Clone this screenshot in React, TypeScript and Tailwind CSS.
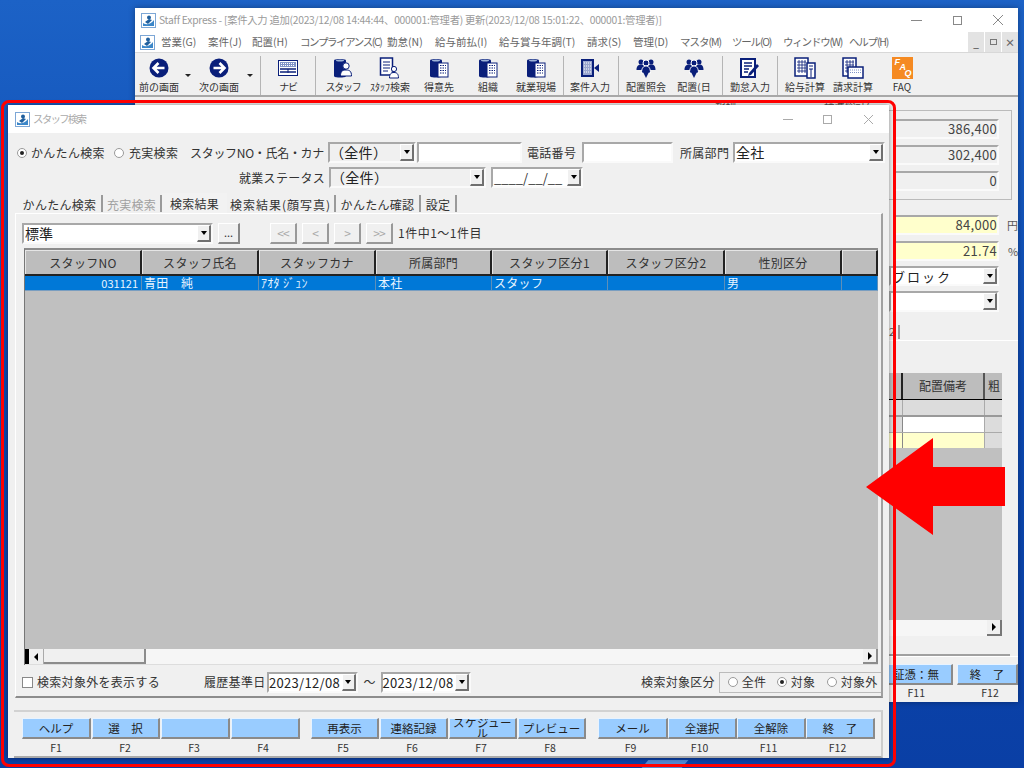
import React from 'react';

const FONT = { fontFamily: '"Noto Sans CJK JP", "Liberation Sans", sans-serif' };

const Navy = '#0a1f7a';

function ArrowIcon({ dir }: { dir: 'l' | 'r' }) {
  return (
    <svg width="20" height="20" viewBox="0 0 20 20">
      <circle cx="10" cy="10" r="9.5" fill={Navy} />
      {dir === 'l' ? (
        <path d="M15.5 10H5M9.5 5L4.5 10l5 5" stroke="#fff" strokeWidth="2.6" fill="none" />
      ) : (
        <path d="M4.5 10H15M10.5 5l5 5-5 5" stroke="#fff" strokeWidth="2.6" fill="none" />
      )}
    </svg>
  );
}
function Drum({ kind }: { kind: 'person' | 'building' }) {
  return (
    <svg width="22" height="22" viewBox="0 0 22 22">
      <path d="M2 3.5C2 1.5 14 1.5 14 3.5V19C14 21 2 21 2 19Z" fill={Navy} />
      <ellipse cx="8" cy="3.5" rx="4" ry="1" fill="#9fb4d8" />
      {kind === 'person' ? (
        <>
          <circle cx="14" cy="9" r="3.2" fill="#fff" stroke={Navy} />
          <path d="M8.5 19c0-5 2-6 5.500-6s5.500 1 5.500 6Z" fill="#fff" stroke={Navy} />
        </>
      ) : (
        <>
          <rect x="10" y="6" width="10" height="14" fill="#fff" stroke={Navy} />
          <path d="M12 8.500h6M12 11h6M12 13.500h6M12 16h6" stroke={Navy} strokeWidth="1" strokeDasharray="1.500 1" />
        </>
      )}
    </svg>
  );
}
function NaviIcon() {
  return (
    <svg width="20" height="20" viewBox="0 0 20 20">
      <rect x="0.500" y="2.500" width="19" height="15" fill="#fff" stroke={Navy} />
      <rect x="2" y="4" width="16" height="5" fill="#7f93c8" />
      <path d="M3 5.500h14M3 7.500h14" stroke="#fff" strokeDasharray="1 1" />
      <path d="M2 11h16M2 14h16" stroke={Navy} strokeWidth="1.500" />
      <path d="M10 11v4" stroke={Navy} />
    </svg>
  );
}
function DocPersonIcon() {
  return (
    <svg width="22" height="22" viewBox="0 0 22 22">
      <rect x="1.500" y="1" width="12" height="17" fill="#fff" stroke={Navy} strokeWidth="1.500" />
      <path d="M4 5h7M4 8h7M4 11h7M4 14h5" stroke={Navy} strokeWidth="1.200" />
      <circle cx="15" cy="12" r="2.600" fill="#fff" stroke={Navy} />
      <path d="M10.500 21c0-4 1.500-5.500 4.500-5.500s4.500 1.500 4.500 5.500Z" fill="#fff" stroke={Navy} />
    </svg>
  );
}
function CaseIcon() {
  return (
    <svg width="22" height="22" viewBox="0 0 22 22">
      <rect x="2" y="2" width="13" height="18" fill={Navy} />
      <rect x="4" y="4" width="9" height="14" fill="#9aa6cf" />
      <path d="M5 6h7M5 9h7M5 12h7M5 15h7" stroke="#fff" strokeDasharray="1 1" />
      <path d="M15 11l5-4v8Z" fill={Navy} />
    </svg>
  );
}
function PeopleIcon() {
  return (
    <svg width="22" height="22" viewBox="0 0 22 22">
      <circle cx="6" cy="5" r="2.500" fill={Navy} />
      <circle cx="16" cy="5" r="2.500" fill={Navy} />
      <path d="M1.500 13c0-4 2-5.500 4.500-5.500S10 9 10 13Zm10.500 0c0-4 2-5.500 4.500-5.500S20.500 9 20.500 13Z" fill={Navy} />
      <circle cx="11" cy="6" r="3" fill={Navy} stroke="#fff" />
      <path d="M6.500 16c0-5 2-7 4.500-7s4.500 2 4.500 7Z" fill={Navy} stroke="#fff" />
      <path d="M8 15h6l-3 6Z" fill={Navy} />
    </svg>
  );
}
function PenIcon() {
  return (
    <svg width="22" height="22" viewBox="0 0 22 22">
      <rect x="2" y="2" width="14" height="18" fill="#fff" stroke={Navy} strokeWidth="2" />
      <path d="M5 6h8M5 9h8M5 12h5M5 15h4" stroke={Navy} strokeWidth="1.400" />
      <path d="M10 16l8-9 2 2-8 9-3 1Z" fill={Navy} />
    </svg>
  );
}
function CalcIcon({ alt }: { alt?: boolean }) {
  return (
    <svg width="22" height="22" viewBox="0 0 22 22">
      <rect x="1" y="1" width="13" height="18" fill="#fff" stroke={Navy} strokeWidth="1.500" />
      <path d="M3 5h9M3 8h9M3 11h9M3 14h9M5 3v13M8 3v13M11 3v13" stroke={Navy} strokeWidth="0.800" />
      {alt ? (
        <>
          <rect x="6" y="10" width="15" height="11" fill="#fff" stroke={Navy} strokeWidth="1.500" />
          <path d="M8 13h11M8 15.500h11" stroke="#7f93c8" strokeDasharray="1 1" />
        </>
      ) : (
        <>
          <rect x="13" y="6" width="8" height="15" fill="#fff" stroke={Navy} strokeWidth="1.500" />
          <path d="M15 9h4M15 12h4M17 12v8" stroke={Navy} />
        </>
      )}
    </svg>
  );
}
function FaqIcon() {
  return (
    <div className="w-[21px] h-[22px] bg-[#f58a22] text-white font-bold italic text-[9px] leading-[7px] relative" style={{ fontFamily: '"Liberation Sans", sans-serif' }}>
      <span className="absolute left-[3px] top-[2px]">F</span>
      <span className="absolute left-[8px] top-[7px]">A</span>
      <span className="absolute left-[13px] top-[13px]">Q</span>
    </div>
  );
}

function Tool({ w, label, icon, tight }: { w: number; label: string; icon: React.ReactNode; tight?: boolean }) {
  return (
    <div style={{ width: w }} className="flex flex-col items-center shrink-0 h-[45px]">
      <div className="h-[24px] mt-[3px] flex items-center justify-center">{icon}</div>
      <div className={`whitespace-nowrap leading-[14px] text-[10px] text-[#333] ${tight ? 'tracking-[-1.2px]' : ''}`}>{label}</div>
    </div>
  );
}
function Tri({ w }: { w: number }) {
  return (
    <div style={{ width: w }} className="shrink-0 flex justify-center pt-[21px]">
      <div className="w-0 h-0 border-l-[3px] border-r-[3px] border-t-[3px] border-l-transparent border-r-transparent border-t-[#222]" />
    </div>
  );
}
function Sep({ w }: { w: number }) {
  return (
    <div style={{ width: w }} className="shrink-0 flex justify-center pt-[3px]">
      <div className="w-[1px] h-[39px] bg-[#b5b5b5]" />
    </div>
  );
}

const menus: [string, number, string][] = [
  ['営業(G)', 47, ''], ['案件(J)', 44, ''], ['配置(H)', 48, ''], ['コンプライアンス(C)', 87, 'tracking-[-1.4px]'], ['勤怠(N)', 48, ''], ['給与前払(I)', 64, ''],
  ['給与賞与年調(T)', 88, ''], ['請求(S)', 46, ''], ['管理(D)', 47, ''], ['マスタ(M)', 52, 'tracking-[-1px]'], ['ツール(O)', 51, 'tracking-[-1.2px]'], ['ウィンドウ(W)', 66, 'tracking-[-1.2px]'], ['ヘルプ(H)', 50, 'tracking-[-1.2px]'],
];

function SunkenBox({ className, children }: { className?: string; children?: React.ReactNode }) {
  return (
    <div className={`border-t-2 border-l-2 border-t-[#a8a8a8] border-l-[#a8a8a8] border-b-2 border-r-2 border-b-[#fafafa] border-r-[#fafafa] ${className ?? ''}`}>
      {children}
    </div>
  );
}
function DropBtn() {
  return (
    <div className="w-[14px] h-full shrink-0 bg-[#f0f0f0] border-r-2 border-b-2 border-r-[#707070] border-b-[#707070] border-t border-l border-t-white border-l-white flex items-center justify-center">
      <div className="w-0 h-0 border-l-[3.500px] border-r-[3.500px] border-t-[4px] border-l-transparent border-r-transparent border-t-black" />
    </div>
  );
}
function Combo({ className, text, size = 'text-[14px]', pad = 'pl-[1px]', white = true }: { className?: string; text: string; size?: string; pad?: string; white?: boolean }) {
  return (
    <SunkenBox className={`flex items-stretch ${className ?? ''}`}>
      <div className={`flex-1 min-w-0 ${white ? 'bg-white' : ''} ${size} ${pad} leading-[17px] whitespace-nowrap text-[#222]`}>{text}</div>
      <DropBtn />
    </SunkenBox>
  );
}
function Radio({ on }: { on?: boolean }) {
  return (
    <div className="w-[10px] h-[10px] rounded-full bg-white border border-[#9a9a9a] flex items-center justify-center shrink-0">
      {on && <div className="w-[4px] h-[4px] rounded-full bg-[#222]" />}
    </div>
  );
}

function Tab({ w, label, color = 'text-[#333]', active, track = 'tracking-[0.3px]' }: { w: number; label: string; color?: string; active?: boolean; track?: string }) {
  return (
    <div style={{ width: w }} className={`shrink-0 flex items-center justify-center whitespace-nowrap text-[12px] pt-[2px] ${track} ${color} ${active ? 'h-[20px] bg-[#f2f2f2]' : 'border-r-2 border-r-[#9a9a9a] mb-[1px] h-[17px]'}`}>
      {label}
    </div>
  );
}
function NavBtn({ ch, cls }: { ch: string; cls: string }) {
  return (
    <div className={`w-[27px] h-[21px] bg-[#f0f0f0] border-t border-l border-t-[#fff] border-l-[#fff] border-r-2 border-b-2 border-r-[#999] border-b-[#999] flex items-center justify-center text-[#aaa] text-[12px] tracking-[-1px] ${cls}`}>
      {ch}
    </div>
  );
}

const cols = ['スタッフNO', 'スタッフ氏名', 'スタッフカナ', '所属部門', 'スタッフ区分1', 'スタッフ区分2', '性別区分', ''];
const rowVals = ['031121', '青田　純', 'ｱｵﾀ ｼﾞｭﾝ', '本社', 'スタッフ', '', '男', ''];
const colW = [117, 117, 117, 116, 116, 117, 117, 36];

function FKey({ label, cls, tight }: { label?: string; cls?: string; tight?: boolean }) {
  return (
    <div className={`h-[21px] bg-[#99ccff] border-t border-l border-t-[#e8f3ff] border-l-[#e8f3ff] border-r-2 border-b-2 border-r-[#8a8a8a] border-b-[#8a8a8a] flex items-center justify-center text-center text-[#222] overflow-hidden ${tight ? 'text-[11.500px] leading-[11px] tracking-[0.5px]' : 'text-[11.500px] leading-[16px]'} ${cls ?? ''}`}>
      {label}
    </div>
  );
}

function RightField({ text, yellow, cls }: { text: string; yellow?: boolean; cls?: string }) {
  return (
    <SunkenBox className={`h-[20px] w-[105px] ml-auto flex items-center justify-end text-[13px] tracking-[0.3px] text-[#444] ${yellow ? 'bg-[#ffffcc]' : 'bg-[#f0f0f0]'} ${cls ?? ''}`}>
      {text}
    </SunkenBox>
  );
}

export default function App() {
  return (
    <div className="relative w-[1024px] h-[768px] overflow-hidden bg-gradient-to-b from-[#1c62c6] via-[#0c48b0] to-[#0a3fa5]" style={FONT}>
      {/* wallpaper streak */}
      <div className="absolute left-[645px] top-[760px] w-[40px] h-[8px] -skew-x-[40deg] bg-[#6fa6e6] opacity-70" />

      {/* Main window */}
      <div className="absolute left-[135px] top-[8px] w-[883px] h-[694px] bg-[#f0f0f0] flex flex-col overflow-hidden shadow-[0_0_6px_rgba(0,0,0,0.35)]">
        <div className="h-[24px] shrink-0 bg-white flex items-center pl-[6px] text-[#9a9a9a] text-[10.300px] tracking-[-0.25px] whitespace-nowrap relative">
          <AppIcon />
          <span className="ml-[3px]">Staff Express - [案件入力 追加(2023/12/08 14:44:44、000001:管理者) 更新(2023/12/08 15:01:22、000001:管理者)]</span>
          <div className="absolute right-0 top-0 h-full flex items-center text-[#777]">
            <div className="w-[11px] h-[1px] bg-[#888] mr-[31px]" />
            <div className="w-[9px] h-[9px] border border-[#888] mr-[30px]" />
            <svg width="12" height="12" viewBox="0 0 12 12" className="mr-[14px]"><path d="M1 1l10 10M11 1L1 11" stroke="#888" fill="none" /></svg>
          </div>
        </div>
        <div className="h-[20px] shrink-0 bg-white flex items-center pl-[5px] text-[10.500px] text-[#666] whitespace-nowrap relative">
          <AppIcon />
          <div className="w-[6px]" />
          {menus.map(([m, w, t]) => (
            <div key={m} style={{ width: w }} className={`shrink-0 ${t}`}>{m}</div>
          ))}
          <div className="absolute right-0 top-0 h-full flex items-stretch">
            {['_', '', '×'].map((g, i) => (
              <div key={i} className="w-[16px] ml-[1px] bg-[#e3e3e3] text-[#666] text-[10px] font-bold flex items-center justify-center">{i === 1 ? <div className="w-[7px] h-[6px] border border-[#777]" /> : g}</div>
            ))}
          </div>
        </div>
        <div className="h-[45px] shrink-0 flex items-start pl-[1px] border-t border-[#d8d8d8] border-b-2 border-b-[#a8a8a8]">
          <Tool w={46} label="前の画面" icon={<ArrowIcon dir="l" />} />
          <Tri w={12} />
          <Tool w={50} label="次の画面" icon={<ArrowIcon dir="r" />} />
          <Tri w={12} />
          <Sep w={8} />
          <Tool w={48} label="ナビ" tight icon={<NaviIcon />} />
          <Sep w={6} />
          <Tool w={50} label="スタッフ" tight icon={<Drum kind="person" />} />
          <Tool w={44} label="ｽﾀｯﾌ検索" icon={<DocPersonIcon />} />
          <Tool w={54} label="得意先" icon={<Drum kind="building" />} />
          <Tool w={44} label="組織" icon={<Drum kind="building" />} />
          <Tool w={52} label="就業現場" icon={<Drum kind="building" />} />
          <Sep w={2} />
          <Tool w={52} label="案件入力" icon={<CaseIcon />} />
          <Sep w={4} />
          <Tool w={52} label="配置照会" icon={<PeopleIcon />} />
          <Tool w={44} label="配置(日" icon={<PeopleIcon />} />
          <Sep w={12} />
          <Tool w={44} label="勤怠入力" icon={<PenIcon />} />
          <Sep w={10} />
          <Tool w={46} label="給与計算" icon={<CalcIcon />} />
          <Tool w={50} label="請求計算" icon={<CalcIcon alt />} />
          <Tool w={48} label="FAQ" icon={<FaqIcon />} />
        </div>

        {/* Body: only its right part shows */}
        <div className="flex-1 flex flex-col min-h-0 text-[#333]">
          <div className="h-[13px] shrink-0 flex text-[10.500px] leading-[13px] pt-[3px] text-[#555]">
            <div className="ml-[580px]">報酬</div>
            <div className="ml-[88px]">標準総計(</div>
          </div>
          <div className="ml-auto mr-[6px] w-[128px] h-[90px] shrink-0 border border-[#bbb] pr-[12px] pt-[8px] flex flex-col gap-[6px]">
            <RightField text="386,400" />
            <RightField text="302,400" />
            <RightField text="0" />
          </div>
          <div className="ml-auto w-[129px] pt-[15px] pr-[19px] flex flex-col">
            <div className="relative">
              <RightField text="84,000" yellow />
              <span className="absolute left-[118px] top-[2px] text-[11px] text-[#555]">円</span>
            </div>
            <div className="relative mt-[6px]">
              <RightField text="21.74" yellow />
              <span className="absolute left-[119px] top-[2px] text-[11px] text-[#555]">%</span>
            </div>
            <Combo className="h-[20px] mt-[5px]" text="ブロック" size="text-[13px] tracking-[2px]" />
            <Combo className="h-[21px] mt-[5px]" text="" />
          </div>
          <div className="ml-auto w-[129px] h-[29px] shrink-0 flex items-end pb-[1px] border-b border-white text-[11px] text-[#555]">
            <span>2</span><div className="w-[2px] h-[14px] bg-[#999] ml-[3px]" />
          </div>
          <div className="ml-auto w-[129px] mt-[32px] flex-1 flex flex-col min-h-0">
            <div className="w-[113px] flex-1 flex flex-col bg-[#c0c0c0]">
              <div className="h-[27px] shrink-0 flex border-b border-b-black text-[12px] text-[#333]">
                <div className="w-[14px] shrink-0 border-r-2 border-r-[#222] bg-[#bdbdbd]" />
                <div className="w-[82px] shrink-0 border-r-2 border-r-[#555] bg-[#bdbdbd] flex items-center justify-center">配置備考</div>
                <div className="flex-1 bg-[#bdbdbd] pl-[3px] flex items-center overflow-hidden">粗</div>
              </div>
              <div className="h-[17px] shrink-0 flex bg-[#dcdcdc] border-b-2 border-b-[#999]">
                <div className="w-[14px] border-r border-r-[#aaa]" />
                <div className="w-[82px] border-r border-r-[#aaa]" />
              </div>
              <div className="h-[16px] shrink-0 flex border-b border-b-[#aaa]">
                <div className="w-[14px] bg-[#dcdcdc] border-r border-r-[#888]" />
                <div className="w-[82px] bg-white border-r border-r-[#aaa]" />
                <div className="flex-1 bg-[#dcdcdc]" />
              </div>
              <div className="h-[15px] shrink-0 flex">
                <div className="w-[14px] bg-[#ffffcc] border-r border-r-[#888]" />
                <div className="w-[82px] bg-[#ffffcc] border-r border-r-[#aaa]" />
                <div className="flex-1 bg-[#dcdcdc]" />
              </div>
              <div className="flex-1" />
              <div className="h-[16px] shrink-0 bg-[#f6f6f6] flex justify-end">
                <div className="w-[15px] h-full bg-[#f0f0f0] border-r-2 border-b-2 border-r-[#777] border-b-[#777] flex items-center justify-center">
                  <div className="w-0 h-0 border-t-[4px] border-b-[4px] border-l-[4px] border-t-transparent border-b-transparent border-l-black" />
                </div>
              </div>
            </div>
            <div className="h-[20px] shrink-0 border-b-2 border-b-[#a0a0a0] mr-[8px]" />
            <div className="h-[8px] shrink-0 border-t border-t-white" />
            <div className="flex h-[20px] shrink-0 gap-[4px] ml-[-1px]">
              <FKey label="証憑：無" cls="w-[65px] justify-end pr-[12px]" />
              <FKey label="終　了" cls="w-[60px] flex-1" />
            </div>
            <div className="flex h-[18px] shrink-0 text-[10.500px] text-[#333] items-center">
              <div className="w-[36px] text-right">F11</div>
              <div className="ml-[55px] w-[20px] text-center">F12</div>
            </div>
          </div>
        </div>
      </div>

      {/* Dialog */}
      <div className="absolute left-[8px] top-[105px] w-[881px] h-[653px] bg-[#f0f0f0] flex flex-col text-[12px] text-[#333] shadow-[0_0_5px_rgba(0,0,0,0.45)]">
        <div className="h-[28px] shrink-0 bg-white flex items-center pl-[7px] relative">
          <AppIcon />
          <span className="ml-[3px] text-[10.500px] tracking-[-1.8px] text-[#aaa]">スタッフ検索</span>
          <div className="absolute right-0 top-0 h-full flex items-center">
            <div className="w-[10px] h-[1px] bg-[#aaa] mr-[30px]" />
            <div className="w-[9px] h-[9px] border border-[#aaa] mr-[31px]" />
            <svg width="11" height="11" viewBox="0 0 11 11" className="mr-[15px]"><path d="M1 1l9 9M10 1L1 10" stroke="#aaa" fill="none" /></svg>
          </div>
        </div>

        {/* search row 1 */}
        <div className="h-[21px] mt-[9px] shrink-0 flex items-center whitespace-nowrap tracking-[0.3px]">
          <div className="ml-[9px]"><Radio on /></div>
          <span className="ml-[4px] w-[76px]">かんたん検索</span>
          <div className="ml-[7px]"><Radio /></div>
          <span className="ml-[5px] w-[52px]">充実検索</span>
          <span className="ml-[9px] w-[136px] tracking-[-0.3px]">スタッフNO・氏名・カナ</span>
          <Combo className="ml-[2px] w-[88px] h-[21px]" text="（全件）" white={false} size="text-[14px]" pad="pl-0" />
          <SunkenBox className="ml-[1px] w-[105px] h-[21px] bg-white" />
          <span className="ml-[5px] w-[50px]">電話番号</span>
          <SunkenBox className="ml-[5px] w-[91px] h-[21px] bg-white" />
          <span className="ml-[7px] w-[50px]">所属部門</span>
          <Combo className="ml-[3px] w-[152px] h-[21px]" text="全社" size="text-[14px]" />
        </div>
        {/* search row 2 */}
        <div className="h-[21px] mt-[4px] shrink-0 flex items-center whitespace-nowrap tracking-[0.3px]">
          <span className="ml-[231px] w-[88px]">就業ステータス</span>
          <Combo className="ml-[2px] w-[157px] h-[21px]" text="（全件）" white={false} pad="pl-0" />
          <SunkenBox className="ml-[5px] w-[92px] h-[21px] flex items-stretch">
            <div className="flex-1 bg-white text-[13px] leading-[17px] px-[1px] tracking-[0px]">____/__/__</div>
            <DropBtn />
          </SunkenBox>
        </div>

        {/* tabs */}
        <div className="h-[20px] mt-[5px] shrink-0 flex items-end">
          <div className="w-[10px]" />
          <Tab w={85} label="かんたん検索" />
          <Tab w={59} label="充実検索" color="text-[#a0a0a0]" />
          <Tab w={65} label="検索結果" active />
          <Tab w={109} label="検索結果(顔写真)" track="tracking-[1px]" />
          <Tab w={85} label="かんたん確認" />
          <Tab w={36} label="設定" />
        </div>

        {/* tab panel */}
        <div className="ml-[7px] w-[868px] h-[485px] shrink-0 border-t border-t-white border-l border-l-white border-r-2 border-r-[#a0a0a0] border-b-2 border-b-[#8c8c8c] flex flex-col pl-[6px]">
          <div className="h-[22px] mt-[8px] shrink-0 flex items-center">
            <Combo className="w-[191px] h-[21px]" text="標準" size="text-[14px]" />
            <div className="ml-[5px] w-[22px] h-[21px] bg-[#f0f0f0] border-t border-l border-t-white border-l-white border-r-2 border-b-2 border-r-[#888] border-b-[#888] flex items-center justify-center text-[11px] leading-none pb-[1px]">...</div>
            <NavBtn ch="<<" cls="ml-[30px]" />
            <NavBtn ch="<" cls="ml-[5px]" />
            <NavBtn ch=">" cls="ml-[5px]" />
            <NavBtn ch=">>" cls="ml-[5px]" />
            <span className="ml-[5px] tracking-[0.5px] whitespace-nowrap">1件中1～1件目</span>
          </div>

          {/* grid */}
          <div className="mt-[4px] ml-[2px] w-[854px] h-[417px] shrink-0 border-t-2 border-l border-t-[#8c8c8c] border-l-[#777] flex flex-col bg-[#c0c0c0] overflow-hidden">
            <div className="h-[26px] shrink-0 flex border-b-2 border-b-[#222]">
              {cols.map((c, i) => (
                <div key={i} style={{ width: colW[i] }} className="shrink-0 bg-[#bdbdbd] border-r-2 border-r-[#222] border-l border-l-[#e5e5e5] border-t border-t-[#e5e5e5] flex items-center justify-center tracking-[0.3px] text-[#333] whitespace-nowrap">{c}</div>
              ))}
            </div>
            <div className="h-[15px] shrink-0 flex bg-[#0078d7] border-b border-b-[#7a9ec0]">
              {rowVals.map((v, i) => (
                <div key={i} style={{ width: colW[i] }} className={`shrink-0 border-r border-r-[#5e8fb8] text-[#e8f4ff] leading-[14px] whitespace-nowrap ${i === 0 ? 'text-right pr-[3px] text-[11px]' : 'pl-[2px] tracking-[0.3px]'}`}>{v}</div>
              ))}
            </div>
            <div className="flex-1" />
            <div className="h-[16px] shrink-0 flex items-stretch bg-[#f6f6f6] border-b border-b-[#ddd]">
              <div className="w-[4px] bg-black" />
              <div className="w-[15px] bg-[#f0f0f0] border-r border-r-[#aaa] flex items-center justify-center">
                <div className="w-0 h-0 border-t-[4px] border-b-[4px] border-r-[4px] border-t-transparent border-b-transparent border-r-black" />
              </div>
              <div className="w-[102px] bg-[#f0f0f0] border-r-2 border-b-2 border-r-[#8c8c8c] border-b-[#8c8c8c]" />
              <div className="flex-1" />
              <div className="w-[15px] bg-[#f0f0f0] border-r-2 border-b-2 border-r-[#8c8c8c] border-b-[#8c8c8c] flex items-center justify-center">
                <div className="w-0 h-0 border-t-[4px] border-b-[4px] border-l-[4px] border-t-transparent border-b-transparent border-l-black" />
              </div>
            </div>
          </div>

          {/* bottom row */}
          <div className="flex-1 flex items-center pt-[3px] whitespace-nowrap tracking-[0.3px]">
            <div className="w-[11px] h-[11px] bg-white border border-[#888] shrink-0" />
            <span className="ml-[4px] w-[122px]">検索対象外を表示する</span>
            <span className="ml-[45px] w-[60px]">履歴基準日</span>
            <Combo className="ml-[3px] w-[91px] h-[21px]" text="2023/12/08" size="text-[13px]" pad="pl-[0px]" />
            <span className="ml-[6px] w-[13px]">～</span>
            <Combo className="ml-[4px] w-[91px] h-[21px]" text="2023/12/08" size="text-[13px]" pad="pl-[0px]" />
            <span className="ml-[170px] w-[75px]">検索対象区分</span>
            <div className="ml-[3px] w-[163px] h-[21px] border-l border-t border-b border-l-[#bbb] border-t-[#bbb] border-b-[#bbb] flex items-center pl-[8px]">
              <Radio /><span className="ml-[4px] w-[27px]">全件</span>
              <div className="ml-[8px]"><Radio on /></div><span className="ml-[4px] w-[28px]">対象</span>
              <div className="ml-[8px]"><Radio /></div><span className="ml-[4px]">対象外</span>
            </div>
          </div>
        </div>

        {/* footer */}
        <div className="mx-[6px] mt-[12px] flex-1 border-t-2 border-t-[#d2d2d2] border-r-2 border-r-[#ccc] border-b-2 border-b-[#aaa] pt-[6px] pl-[8px] flex flex-col">
          <div className="flex">
            <div className="flex gap-[1px]">
              <FKey label="ヘルプ" cls="w-[69px]" />
              <FKey label="選　択" cls="w-[68px]" />
              <FKey cls="w-[69px]" />
              <FKey cls="w-[69px]" />
            </div>
            <div className="flex gap-[1px] ml-[11px]">
              <FKey label="再表示" cls="w-[68px]" />
              <FKey label="連絡記録" cls="w-[68px]" />
              <FKey label="スケジュール" tight cls="w-[68px]" />
              <FKey label="プレビュー" cls="w-[68px]" />
            </div>
            <div className="flex ml-[12px]">
              <FKey label="メール" cls="w-[70px]" />
              <FKey label="全選択" cls="w-[69px]" />
              <FKey label="全解除" cls="w-[69px]" />
              <FKey label="終　了" cls="w-[69px]" />
            </div>
          </div>
          <div className="flex mt-[2px] text-[10.500px] leading-[14px] text-[#333]">
            {[['F1', 'F2', 'F3', 'F4'], ['F5', 'F6', 'F7', 'F8']].map((g, i) => (
              <div key={i} className={`flex gap-[1px] ${i ? 'ml-[12px]' : ''}`}>
                {g.map((f) => (
                  <div key={f} className="w-[68px] text-center">{f}</div>
                ))}
              </div>
            ))}
            <div className="flex ml-[12px]">
              {['F9', 'F10', 'F11', 'F12'].map((f) => (
                <div key={f} className="w-[69px] text-center">{f}</div>
              ))}
            </div>
          </div>
        </div>
      </div>

      {/* Red annotation */}
      <div className="absolute left-[1px] top-[100px] w-[895px] h-[667px] rounded-[8px] border-[3px] border-[#ff0000] pointer-events-none" />
      <svg className="absolute left-[860px] top-[430px] pointer-events-none" width="150" height="110" viewBox="0 0 150 110">
        <path d="M6 57L73 8V37H145V76H73V105Z" fill="#ff0000" />
      </svg>
    </div>
  );
}

function AppIcon() {
  return (
    <svg width="15" height="15" viewBox="0 0 15 15" className="shrink-0">
      <rect x="0.500" y="0.500" width="14" height="14" fill="#fff" stroke="#7da7d6" />
      <path d="M2 10c3 2 7 2 11-3v6H2Z" fill="#3b86c8" />
      <circle cx="8" cy="4.500" r="2" fill="#1f5f9e" />
      <path d="M4 9l4-3 3 1-4 4Z" fill="#1f5f9e" />
    </svg>
  );
}
